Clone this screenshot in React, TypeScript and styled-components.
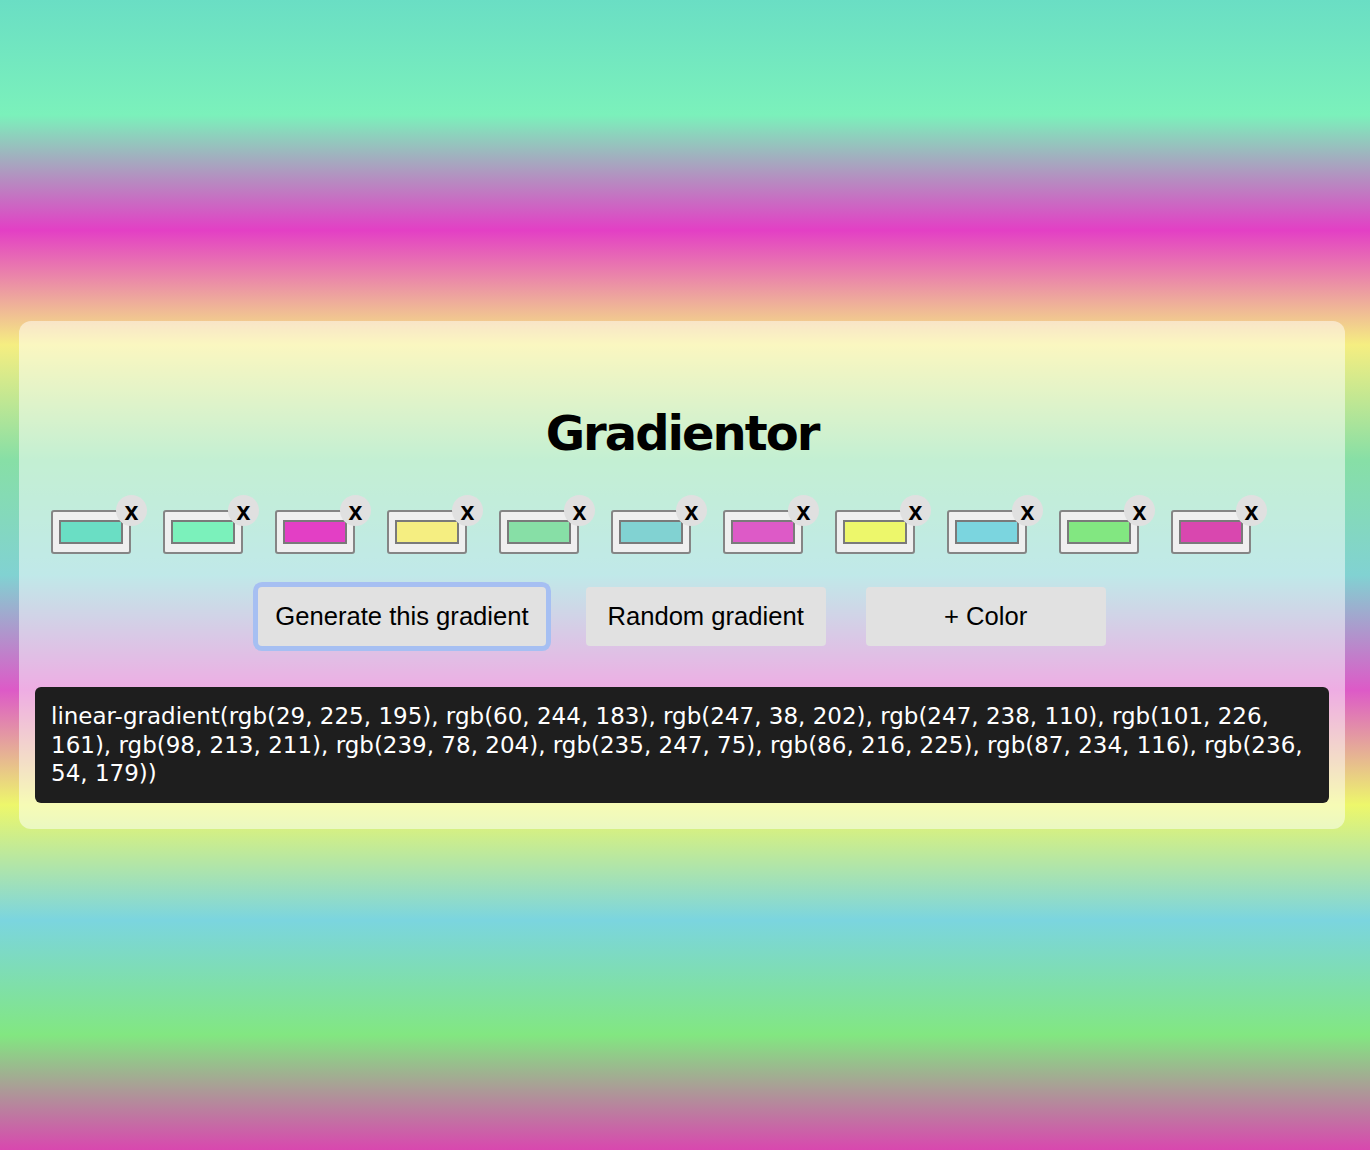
import React, { useState } from "react";
import styled, { createGlobalStyle } from "styled-components";

const GlobalStyle = createGlobalStyle`
  html, body {
    margin: 0;
    padding: 0;
  }
  body {
    font-family: "DejaVu Sans", Verdana, sans-serif;
  }
`;

type RGB = [number, number, number];

// values shown in the code box
const sourceColors: RGB[] = [
  [29, 225, 195],
  [60, 244, 183],
  [247, 38, 202],
  [247, 238, 110],
  [101, 226, 161],
  [98, 213, 211],
  [239, 78, 204],
  [235, 247, 75],
  [86, 216, 225],
  [87, 234, 116],
  [236, 54, 179],
];

// how they appear on screen in the reference
const displayColors: RGB[] = [
  [106, 222, 196],
  [123, 241, 187],
  [227, 63, 197],
  [245, 238, 129],
  [135, 223, 166],
  [129, 210, 210],
  [221, 90, 199],
  [237, 247, 107],
  [123, 213, 223],
  [130, 231, 129],
  [217, 71, 175],
];

const rgb = (c: RGB) => `rgb(${c[0]}, ${c[1]}, ${c[2]})`;

const Page = styled.div<{ $bg: string }>`
  min-height: 100vh;
  box-sizing: border-box;
  display: flex;
  align-items: center;
  padding-left: 19px;
  background: ${(p) => p.$bg};
`;

const Card = styled.main`
  width: 1326px;
  box-sizing: border-box;
  padding: 16px 16px 26px;
  border-radius: 12px;
  background: rgba(255, 255, 255, 0.5);
  display: flex;
  flex-direction: column;
`;

const Title = styled.h1`
  margin: 68px 0 0;
  height: 56px;
  line-height: 56px;
  text-align: center;
  font-family: "DejaVu Sans", Verdana, sans-serif;
  font-weight: 700;
  font-size: 48px;
  letter-spacing: -2px;
  color: #000;
`;

const SwatchRow = styled.div`
  margin-top: 49px;
  display: flex;
  flex-wrap: wrap;
`;

const SwatchItem = styled.div`
  position: relative;
  margin: 0 16px;
`;

const SwatchBox = styled.label`
  display: flex;
  width: 80px;
  height: 44px;
  box-sizing: border-box;
  padding: 8px 6px;
  border: 2px solid #858585;
  border-radius: 3px;
  background: #efefef;
`;

const SwatchFill = styled.span`
  flex: 1;
  border: 2px solid #7a7a7a;
`;

const RemoveButton = styled.button`
  position: absolute;
  top: -15px;
  right: -16px;
  width: 31px;
  height: 31px;
  padding: 0;
  border: none;
  border-radius: 50%;
  background: #e0e0e0;
  color: #000;
  font-family: "Liberation Sans", Arial, sans-serif;
  font-weight: 700;
  font-size: 25px;
  line-height: 32px;
  text-align: center;
  overflow: visible;
  cursor: pointer;
`;

const ButtonRow = styled.div`
  margin-top: 33px;
  display: flex;
  justify-content: center;
`;

const ActionButton = styled.button<{ $focused?: boolean }>`
  margin: 0 20px;
  min-width: 240px;
  height: 59px;
  padding: 0 17px;
  border: none;
  border-radius: 4px;
  background: #e1e1e1;
  color: #000;
  font-family: "Liberation Sans", Arial, sans-serif;
  font-size: 25.6px;
  cursor: pointer;
  outline: none;
  box-shadow: ${(p) => (p.$focused ? "0 0 0 5px #a6bff2" : "none")};
`;

const CodeBox = styled.pre`
  margin: 41px 0 0;
  padding: 15px 16px;
  border-radius: 6px;
  background: #1e1e1e;
  color: #fff;
  font-family: "DejaVu Sans", Verdana, sans-serif;
  font-size: 23px;
  line-height: 28.5px;
  white-space: normal;
  word-wrap: break-word;
`;

export default function App() {
  const [colors, setColors] = useState<number[]>(sourceColors.map((_, i) => i));
  const shown = colors.map((i) => displayColors[i]);
  const bg = `linear-gradient(${shown.map(rgb).join(", ")})`;
  const code = `linear-gradient(${colors.map((i) => rgb(sourceColors[i])).join(", ")})`;

  return (
    <>
      <GlobalStyle />
      <Page $bg={bg}>
        <Card>
          <Title>Gradientor</Title>
          <SwatchRow>
            {colors.map((ci, idx) => (
              <SwatchItem key={idx}>
                <SwatchBox>
                  <SwatchFill style={{ background: rgb(displayColors[ci]) }} />
                </SwatchBox>
                <RemoveButton
                  onClick={() => setColors(colors.filter((_, j) => j !== idx))}
                >
                  x
                </RemoveButton>
              </SwatchItem>
            ))}
          </SwatchRow>
          <ButtonRow>
            <ActionButton $focused>Generate this gradient</ActionButton>
            <ActionButton>Random gradient</ActionButton>
            <ActionButton>+ Color</ActionButton>
          </ButtonRow>
          <CodeBox>{code}</CodeBox>
        </Card>
      </Page>
    </>
  );
}
